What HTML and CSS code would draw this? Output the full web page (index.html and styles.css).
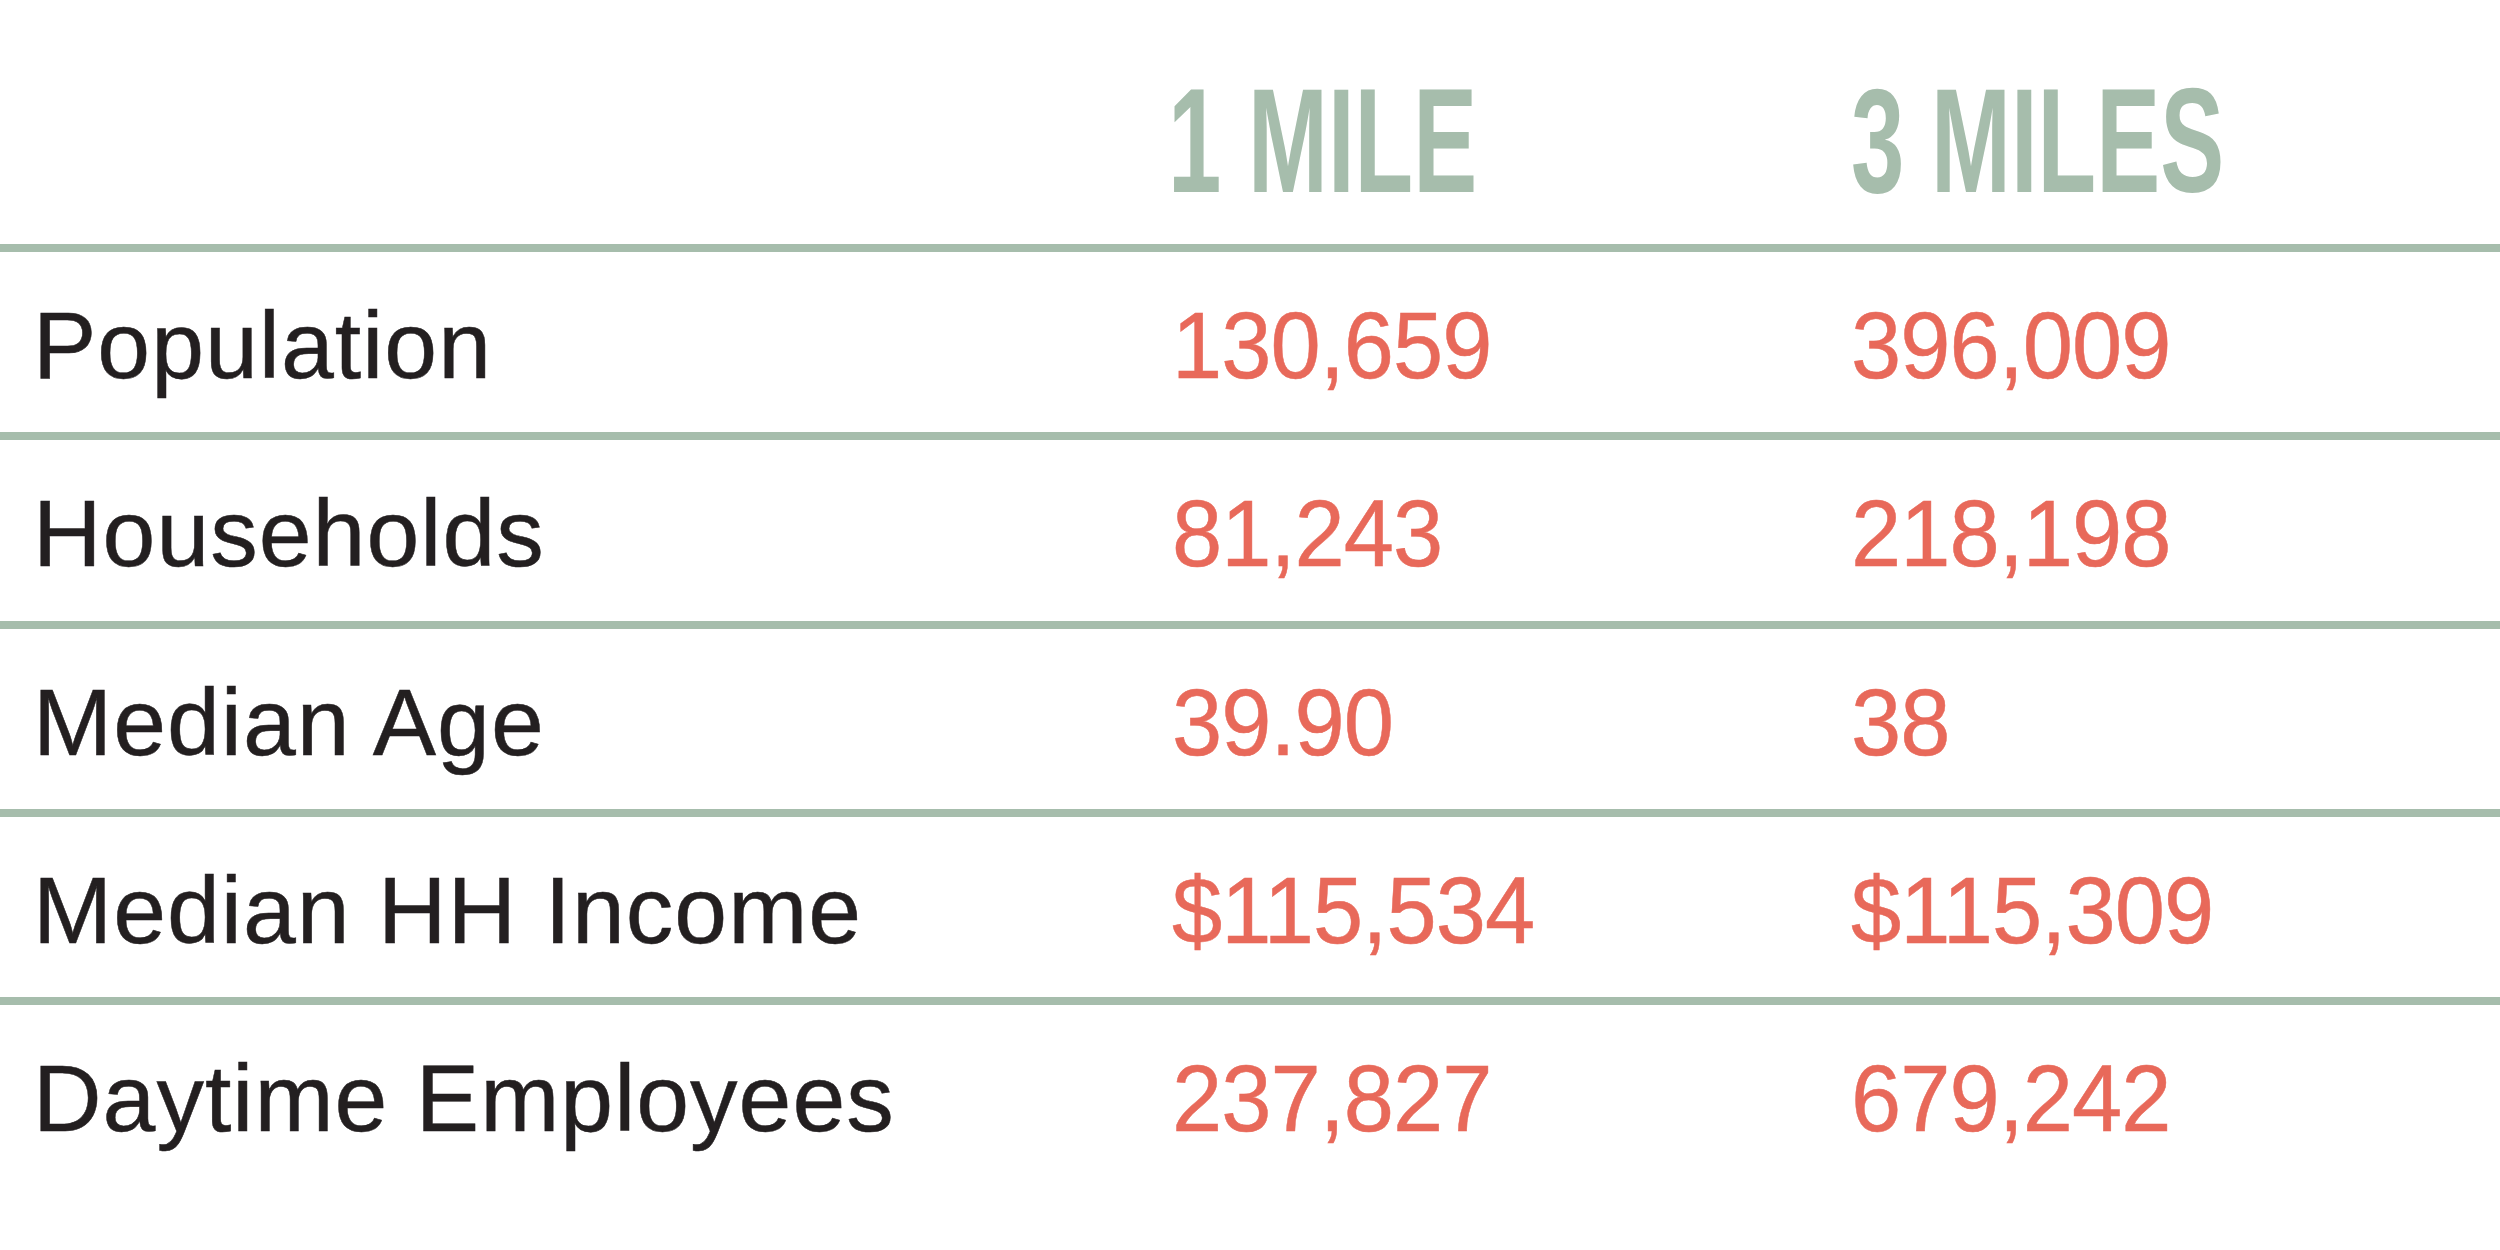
FILE: index.html
```html
<!DOCTYPE html>
<html lang="en">
<head>
<meta charset="utf-8">
<title>Demographics</title>
<link rel="stylesheet" href="styles.css">
</head>
<body>
<main class="stats">
  <div class="row head">
    <div class="cell label"></div>
    <div class="cell"><span class="hd">1 MILE</span></div>
    <div class="cell"><span class="hd">3 MILES</span></div>
  </div>
  <div class="row">
    <div class="cell label">Population</div>
    <div class="cell val"><span class="num">130,659</span></div>
    <div class="cell val"><span class="num">396,009</span></div>
  </div>
  <div class="row">
    <div class="cell label">Households</div>
    <div class="cell val"><span class="num">81,243</span></div>
    <div class="cell val"><span class="num">218,198</span></div>
  </div>
  <div class="row">
    <div class="cell label">Median Age</div>
    <div class="cell val"><span class="num">39.90</span></div>
    <div class="cell val"><span class="num">38</span></div>
  </div>
  <div class="row">
    <div class="cell label">Median HH Income</div>
    <div class="cell val"><span class="num">$115,534</span></div>
    <div class="cell val"><span class="num">$115,309</span></div>
  </div>
  <div class="row last">
    <div class="cell label">Daytime Employees</div>
    <div class="cell val"><span class="num">237,827</span></div>
    <div class="cell val"><span class="num">679,242</span></div>
  </div>
</main>
</body>
</html>
```
FILE: styles.css
```css
html, body {
  margin: 0;
  padding: 0;
  background: #ffffff;
}

body {
  font-family: "Liberation Sans", Arial, sans-serif;
  color: #231f20;
}

.stats {
  width: 2500px;
  height: 1250px;
  display: flex;
  flex-direction: column;
}

.row {
  display: grid;
  grid-template-columns: 1168px 683px 1fr;
  height: 188.25px;
  box-sizing: border-box;
  border-bottom: 8px solid #a6bdac;
  flex: none;
}

.row.head {
  height: 252px;
}

.row.last {
  border-bottom: none;
  height: auto;
}

.cell {
  padding-top: 6px;
  font-size: 95px;
  line-height: 174px;
  letter-spacing: 1px;
  white-space: nowrap;
  -webkit-text-stroke: 0.5px currentColor;
}

.cell.label {
  padding-left: 33px;
  color: #231f20;
}

.cell.val {
  color: #e8695a;
  letter-spacing: -1px;
}

.cell.val:nth-child(2) {
  padding-left: 4px;
}

.num {
  display: inline-block;
  transform: scaleX(0.95);
  transform-origin: left center;
}

.head .cell {
  padding-top: 66px;
  font-size: 149px;
  line-height: 149px;
  letter-spacing: 0;
  -webkit-text-stroke: 0;
}

.hd {
  display: inline-block;
  font-weight: 700;
  color: #a6bdac;
  transform: scaleX(0.644);
  transform-origin: left center;
}
```
